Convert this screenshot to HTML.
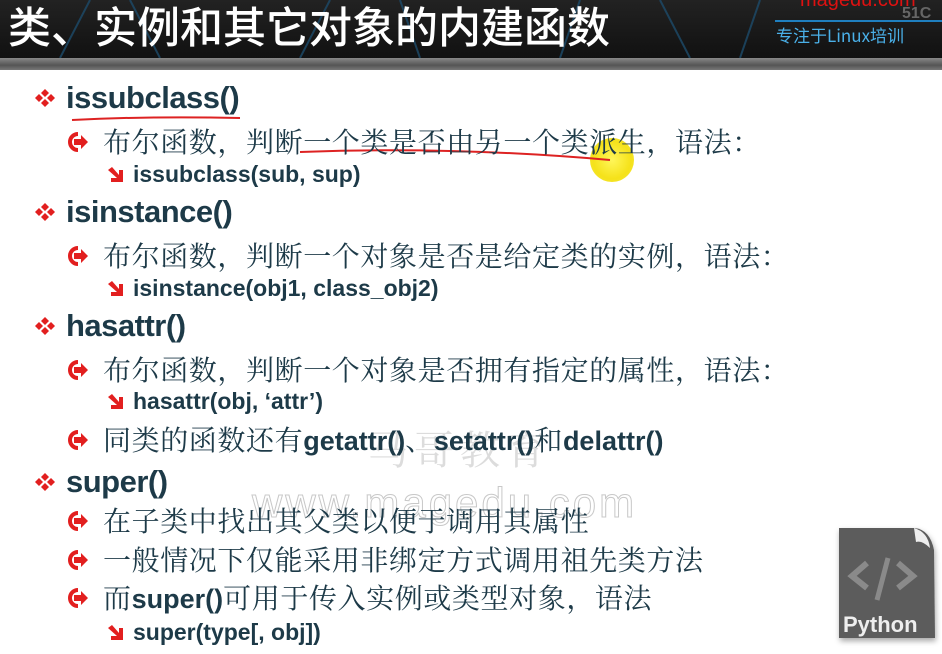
<!DOCTYPE html>
<html><head><meta charset="utf-8"><style>
body{margin:0;width:942px;height:654px;overflow:hidden;background:#fff;position:relative;font-family:"Liberation Sans","Noto Sans CJK SC",sans-serif}
.hd{position:absolute;left:0;top:0;width:942px;height:58px;background:linear-gradient(#222,#111)}
.band{position:absolute;left:0;top:58px;width:942px;height:12px;background:linear-gradient(#888,#555 60%,#777)}
.t{position:absolute;white-space:nowrap;color:#1d3a48;line-height:1}
.h1{font-size:31px;font-weight:bold;letter-spacing:-0.5px}
.cn{font-family:"Noto Serif CJK SC","Noto Sans CJK SC",serif;font-size:28px;letter-spacing:0.6px;color:#1d3a48}
.cn b{font-family:"Liberation Sans",sans-serif;font-size:27px;letter-spacing:0}
.sub{font-size:23px;font-weight:bold}
.ic{position:absolute}
</style></head><body>
<div class="hd"></div>
<svg style="position:absolute;left:0;top:0" width="942" height="58">
<g stroke="#1d4b6a" stroke-width="2" fill="none" opacity=".8">
<path d="M60 58 L90 0 M160 58 L130 0 M300 58 L330 0 M420 58 L400 0 M560 58 L580 0 M690 58 L660 0 M740 58 L760 0"/>
</g></svg>
<div class="t" style="left:8px;top:4px;font-size:43px;color:#fff;font-family:'Noto Sans CJK SC',sans-serif;font-weight:500">类、实例和其它对象的内建函数</div>
<div class="t" style="left:800px;top:-10px;font-size:20px;color:#d11">magedu.com</div>
<div class="t" style="left:902px;top:6px;font-size:16px;color:#666;font-weight:bold">51C</div>
<div style="position:absolute;left:775px;top:20px;width:167px;height:2px;background:#1f7fbf"></div>
<div class="t" style="left:776px;top:26px;font-size:17px;color:#4ab0e8;font-family:'Noto Sans CJK SC',sans-serif">专注于Linux培训</div>
<div class="band"></div>

<div class="t" style="left:368px;top:428px;font-size:40px;color:#dcdcdc;font-family:'Noto Serif CJK SC',serif;letter-spacing:6px">马哥教育</div>
<div class="t" style="left:252px;top:482px;font-size:42px;color:transparent;-webkit-text-stroke:1px #c8c8c8;letter-spacing:3px">www.magedu.com</div>

<div style="position:absolute;left:590px;top:138px;width:44px;height:44px;border-radius:50%;background:radial-gradient(#fff65a,#f5e21a 60%,#f3e640)"></div>
<svg style="position:absolute;left:0;top:0" width="942" height="654">
<path d="M72 120 Q150 116 240 118" stroke="#d22" stroke-width="2" fill="none"/>
<path d="M300 152 Q450 146 610 160" stroke="#d22" stroke-width="2" fill="none"/>
</svg>

<svg class="ic" style="left:34px;top:88px" width="22" height="20"><g fill="#e21f1f"><path d="M11 1l4 4-4 4-4-4z M5 6l4 4-4 4-4-4z M17 6l4 4-4 4-4-4z M11 11l4 4-4 4-4-4z"/></g></svg>
<svg class="ic" style="left:34px;top:202px" width="22" height="20"><g fill="#e21f1f"><path d="M11 1l4 4-4 4-4-4z M5 6l4 4-4 4-4-4z M17 6l4 4-4 4-4-4z M11 11l4 4-4 4-4-4z"/></g></svg>
<svg class="ic" style="left:34px;top:316px" width="22" height="20"><g fill="#e21f1f"><path d="M11 1l4 4-4 4-4-4z M5 6l4 4-4 4-4-4z M17 6l4 4-4 4-4-4z M11 11l4 4-4 4-4-4z"/></g></svg>
<svg class="ic" style="left:34px;top:472px" width="22" height="20"><g fill="#e21f1f"><path d="M11 1l4 4-4 4-4-4z M5 6l4 4-4 4-4-4z M17 6l4 4-4 4-4-4z M11 11l4 4-4 4-4-4z"/></g></svg>

<div class="t h1" style="left:66px;top:82px">issubclass()</div>
<div class="t h1" style="left:66px;top:196px">isinstance()</div>
<div class="t h1" style="left:66px;top:310px">hasattr()</div>
<div class="t h1" style="left:66px;top:466px">super()</div>

<svg class="ic" style="left:68px;top:132px" width="22" height="20"><path d="M10 2a8 8 0 1 0 0 16" stroke="#e21f1f" stroke-width="4" fill="none"/><path d="M6 7h7V3l7 7-7 7v-4H6z" fill="#e21f1f"/></svg>
<svg class="ic" style="left:68px;top:246px" width="22" height="20"><path d="M10 2a8 8 0 1 0 0 16" stroke="#e21f1f" stroke-width="4" fill="none"/><path d="M6 7h7V3l7 7-7 7v-4H6z" fill="#e21f1f"/></svg>
<svg class="ic" style="left:68px;top:360px" width="22" height="20"><path d="M10 2a8 8 0 1 0 0 16" stroke="#e21f1f" stroke-width="4" fill="none"/><path d="M6 7h7V3l7 7-7 7v-4H6z" fill="#e21f1f"/></svg>
<svg class="ic" style="left:68px;top:430px" width="22" height="20"><path d="M10 2a8 8 0 1 0 0 16" stroke="#e21f1f" stroke-width="4" fill="none"/><path d="M6 7h7V3l7 7-7 7v-4H6z" fill="#e21f1f"/></svg>
<svg class="ic" style="left:68px;top:511px" width="22" height="20"><path d="M10 2a8 8 0 1 0 0 16" stroke="#e21f1f" stroke-width="4" fill="none"/><path d="M6 7h7V3l7 7-7 7v-4H6z" fill="#e21f1f"/></svg>
<svg class="ic" style="left:68px;top:550px" width="22" height="20"><path d="M10 2a8 8 0 1 0 0 16" stroke="#e21f1f" stroke-width="4" fill="none"/><path d="M6 7h7V3l7 7-7 7v-4H6z" fill="#e21f1f"/></svg>
<svg class="ic" style="left:68px;top:588px" width="22" height="20"><path d="M10 2a8 8 0 1 0 0 16" stroke="#e21f1f" stroke-width="4" fill="none"/><path d="M6 7h7V3l7 7-7 7v-4H6z" fill="#e21f1f"/></svg>

<div class="t cn" style="left:103px;top:127px">布尔函数，判断一个类是否由另一个类派生，语法：</div>
<div class="t cn" style="left:103px;top:241px">布尔函数，判断一个对象是否是给定类的实例，语法：</div>
<div class="t cn" style="left:103px;top:355px">布尔函数，判断一个对象是否拥有指定的属性，语法：</div>
<div class="t cn" style="left:103px;top:425px">同类的函数还有<b>getattr()</b>、<b>setattr()</b>和<b>delattr()</b></div>
<div class="t cn" style="left:103px;top:506px">在子类中找出其父类以便于调用其属性</div>
<div class="t cn" style="left:103px;top:545px">一般情况下仅能采用非绑定方式调用祖先类方法</div>
<div class="t cn" style="left:103px;top:583px">而<b>super()</b>可用于传入实例或类型对象，语法</div>

<svg class="ic" style="left:106px;top:166px" width="18" height="18"><path d="M2 4l4-3 7 8V4h4v12H5v-4h6z" fill="#e21f1f"/></svg>
<svg class="ic" style="left:106px;top:280px" width="18" height="18"><path d="M2 4l4-3 7 8V4h4v12H5v-4h6z" fill="#e21f1f"/></svg>
<svg class="ic" style="left:106px;top:393px" width="18" height="18"><path d="M2 4l4-3 7 8V4h4v12H5v-4h6z" fill="#e21f1f"/></svg>
<svg class="ic" style="left:106px;top:624px" width="18" height="18"><path d="M2 4l4-3 7 8V4h4v12H5v-4h6z" fill="#e21f1f"/></svg>

<div class="t sub" style="left:133px;top:163px">issubclass(sub, sup)</div>
<div class="t sub" style="left:133px;top:277px">isinstance(obj1, class_obj2)</div>
<div class="t sub" style="left:133px;top:390px">hasattr(obj, ‘attr’)</div>
<div class="t sub" style="left:133px;top:621px">super(type[, obj])</div>

<svg class="ic" style="left:830px;top:520px" width="112" height="134">
<defs><filter id="sh"><feDropShadow dx="1" dy="3" stdDeviation="3" flood-opacity=".35"/></filter></defs>
<path d="M9 8 H85 Q100 10 104 30 L105 118 H9Z" fill="#5b5b5b" filter="url(#sh)"/>
<path d="M84 8 Q98 12 100 28 Q92 20 86 22 Z" fill="#eee"/>
<path d="M37 43 L22 56 L37 68" stroke="#8a8a8a" stroke-width="6" fill="none"/>
<path d="M68 43 L83 56 L68 68" stroke="#8a8a8a" stroke-width="6" fill="none"/>
<path d="M58 38 L47 80" stroke="#8a8a8a" stroke-width="5"/>
<text x="13" y="112" font-family="Liberation Sans" font-weight="bold" font-size="22" fill="#eee">Python</text>
</svg>
</body></html>
